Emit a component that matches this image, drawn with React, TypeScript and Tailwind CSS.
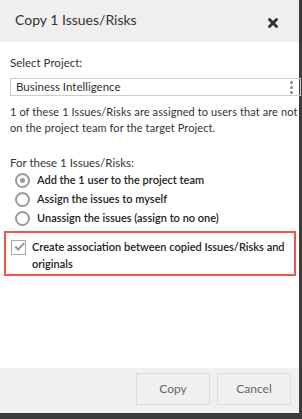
import { X } from 'lucide-react';

function Radio({ checked, label }: { checked?: boolean; label: string }) {
    return (
        <div className="flex items-center h-[19px]">
            <span className="ml-[15px] w-[15px] h-[15px] rounded-full border-2 border-[#9a9a9a] bg-white flex items-center justify-center">
                {checked && <span className="w-[5px] h-[5px] rounded-full bg-[#9a9a9a]" />}
            </span>
            <span className="ml-[7px] text-[11px] text-[#222] font-semibold">{label}</span>
        </div>
    );
}

export default function App() {
    return (
        <div className="w-[302px] h-[419px] bg-[#3b3b3b] overflow-hidden" style={{ fontFamily: 'Lato, "Liberation Sans", sans-serif' }}>
            <div className="w-[299px] h-[413px] flex flex-col bg-white">
                <div className="h-[42px] bg-[#efefef] flex items-center justify-between pl-[15px] pr-[19px] shrink-0">
                    <h1 className="text-[14px] text-[#333] mt-[-3px]">Copy 1 Issues/Risks</h1>
                    <X size={14} strokeWidth={5} className="text-[#333] mt-[3px]" />
                </div>
                <div className="flex-1 pl-[10px] pt-[13px]">
                    <p className="text-[11.5px] text-[#333] leading-[16px]">Select Project:</p>
                    <div className="mt-[7px] h-[18px] border border-[#ccc] flex items-center justify-between pl-[5px] pr-[7px] mr-[-2px]">
                        <span className="text-[11.5px] text-[#333]">Business Intelligence</span>
                        <span className="flex flex-col gap-[2px]">
                            <span className="w-[3px] h-[3px] bg-[#888] rounded-full" />
                            <span className="w-[3px] h-[3px] bg-[#888] rounded-full" />
                            <span className="w-[3px] h-[3px] bg-[#888] rounded-full" />
                        </span>
                    </div>
                    <p className="mt-[8px] text-[11px] text-[#333] leading-[16px] tracking-[0.1px]">
                        1 of these 1 Issues/Risks are assigned to users that are not on the project team for the target Project.
                    </p>
                    <p className="mt-[18px] text-[11.5px] text-[#333] leading-[17px]">For these 1 Issues/Risks:</p>
                    <div className="ml-[-10px]">
                        <Radio checked label="Add the 1 user to the project team" />
                        <Radio label="Assign the issues to myself" />
                        <Radio label="Unassign the issues (assign to no one)" />
                    </div>
                    <div className="ml-[-6px] mr-[3px] mt-[3px] border-2 border-[#f2544a] flex items-start pt-[5px] pb-[2px]">
                        <span className="ml-[5px] mt-[2px] w-[15px] h-[15px] border border-[#aaa] bg-white flex items-center justify-center shrink-0">
                            <svg width="13" height="11" viewBox="0 0 13 11" className="ml-[2px] mt-[-2px]">
                                <path d="M1.5 5.5 L5 9 L12 1.5" fill="none" stroke="#999" strokeWidth="2.5" />
                            </svg>
                        </span>
                        <span className="ml-[6px] text-[11px] text-[#222] font-semibold leading-[17px]">
                            Create association between copied Issues/Risks and originals
                        </span>
                    </div>
                </div>
                <div className="h-[45px] bg-[#f0f0f0] flex items-start justify-end gap-[7px] pr-[8px] pt-[5px] shrink-0">
                    <button className="w-[74px] h-[32px] border border-[#ddd] text-[12px] text-[#666]">Copy</button>
                    <button className="w-[74px] h-[32px] border border-[#ddd] text-[12px] text-[#666]">Cancel</button>
                </div>
            </div>
        </div>
    );
}
